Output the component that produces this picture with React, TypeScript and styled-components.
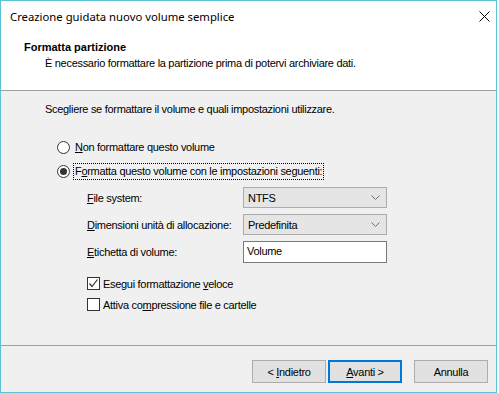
import React from 'react';
import styled, {createGlobalStyle} from 'styled-components'

const GlobalStyle = createGlobalStyle`
    html, body {
        margin:0;
        padding:0;
        background:#ffffff;
    }
    body {
        font-family:"Liberation Sans", Arial, sans-serif;
        font-size:11px;
        letter-spacing:-0.3px;
        color:#000000;
    }
`

const Window = styled.div`
    width:497px;
    height:393px;
    box-sizing:border-box;
    border:1px solid #5cc2d6;
    background:#f0f0f0;
    display:flex;
    flex-direction:column;
`
const TitleBar = styled.div`
    height:30px;
    background:#ffffff;
    display:flex;
    align-items:center;
    justify-content:space-between;
    padding:0 6px 0 9px;
    font-family:"Noto Sans", "Open Sans", sans-serif;
    font-size:11.3px;
    letter-spacing:0;
`
const Header = styled.div`
    background:#ffffff;
    border-bottom:1px solid #a0a0a0;
    display:flex;
    flex-direction:column;
    padding-top:10px;
    height:49px;
`
const HeaderTitle = styled.div`
    font-weight:bold;
    letter-spacing:0;
    line-height:13px;
    padding-left:23px;
`
const HeaderSub = styled.div`
    line-height:13px;
    margin-top:3px;
    padding-left:44px;
`
const Body = styled.div`
    flex:1;
    border-bottom:1px solid #a0a0a0;
    display:flex;
    flex-direction:column;
    padding-top:12px;
`
const Intro = styled.div`
    line-height:13px;
    padding-left:44px;
`
const RadioGroup = styled.div`
    display:flex;
    flex-direction:column;
    gap:7px;
    margin-top:23px;
    padding-left:56px;
`
const Row = styled.label`
    display:flex;
    align-items:center;
    gap:4px;
    height:17px;
`
const RadioCircle = styled.span<{checked?: boolean}>`
    width:13px;
    height:13px;
    box-sizing:border-box;
    border:1px solid #333333;
    border-radius:50%;
    background:#ffffff;
    display:flex;
    align-items:center;
    justify-content:center;
    &::after {
        content:"";
        width:7px;
        height:7px;
        border-radius:50%;
        background:${p => p.checked ? '#333333' : 'transparent'};
    }
`
const RowText = styled.span<{focused?: boolean}>`
    line-height:15px;
    padding:0 1px;
    outline:${p => p.focused ? '1px dotted #000000' : 'none'};
`
const Key = styled.span`
    text-decoration:underline;
`
const Fields = styled.div`
    display:grid;
    grid-template-columns:156px 144px;
    row-gap:6px;
    margin-top:7px;
    padding-left:86px;
`
const FieldLabel = styled.div`
    display:flex;
    align-items:center;
`
const Select = styled.div`
    height:21px;
    box-sizing:border-box;
    border:1px solid #acacac;
    background:#e5e5e5;
    display:flex;
    align-items:center;
    justify-content:space-between;
    padding:0 6px 0 4px;
`
const TextInput = styled.div`
    height:22px;
    box-sizing:border-box;
    border:1px solid #7a7a7a;
    background:#ffffff;
    display:flex;
    align-items:flex-start;
    padding:3px 0 0 3px;
`
const Checks = styled.div`
    display:flex;
    flex-direction:column;
    gap:6px;
    margin-top:13px;
    padding-left:86px;
`
const CheckRow = styled.label`
    display:flex;
    align-items:center;
    gap:3px;
    height:15px;
`
const CheckBox = styled.span`
    width:13px;
    height:13px;
    box-sizing:border-box;
    border:1px solid #333333;
    background:#ffffff;
    display:flex;
    align-items:center;
    justify-content:center;
`
const Footer = styled.div`
    height:46px;
    display:flex;
    justify-content:flex-end;
    align-items:flex-start;
    padding:14px 8px 0 0;
    box-sizing:border-box;
`
const Button = styled.div<{primary?: boolean; gapLeft?: number}>`
    width:74px;
    height:23px;
    box-sizing:border-box;
    border:${p => p.primary ? '2px solid #0078d7' : '1px solid #adadad'};
    background:#e1e1e1;
    display:flex;
    align-items:center;
    justify-content:center;
    margin-left:${p => p.gapLeft ?? 0}px;
`

function Chevron(){
    return (
        <svg width="9" height="5" viewBox="0 0 9 5">
            <path d="M0.5 0.5 L4.5 4.5 L8.5 0.5" fill="none" stroke="#707070" strokeWidth="1"/>
        </svg>
    )
}

function CloseIcon(){
    return (
        <svg width="11" height="11" viewBox="0 0 11 11">
            <path d="M0.5 0.5 L10.5 10.5 M10.5 0.5 L0.5 10.5" stroke="#000000" strokeWidth="1"/>
        </svg>
    )
}

function Tick(){
    return (
        <svg width="11" height="11" viewBox="0 0 11 11">
            <path d="M1.5 5.5 L4 8.5 L9.5 1.5" fill="none" stroke="#333333" strokeWidth="1.2"/>
        </svg>
    )
}

export default function App(){
    return (
        <Window>
            <GlobalStyle/>
            <TitleBar>
                <span>Creazione guidata nuovo volume semplice</span>
                <CloseIcon/>
            </TitleBar>
            <Header>
                <HeaderTitle>Formatta partizione</HeaderTitle>
                <HeaderSub>È necessario formattare la partizione prima di potervi archiviare dati.</HeaderSub>
            </Header>
            <Body>
                <Intro>Scegliere se formattare il volume e quali impostazioni utilizzare.</Intro>
                <RadioGroup>
                    <Row>
                        <RadioCircle/>
                        <RowText><Key>N</Key>on formattare questo volume</RowText>
                    </Row>
                    <Row>
                        <RadioCircle checked/>
                        <RowText focused>F<Key>o</Key>rmatta questo volume con le impostazioni seguenti:</RowText>
                    </Row>
                </RadioGroup>
                <Fields>
                    <FieldLabel><span><Key>F</Key>ile system:</span></FieldLabel>
                    <Select><span>NTFS</span><Chevron/></Select>
                    <FieldLabel><span><Key>D</Key>imensioni unità di allocazione:</span></FieldLabel>
                    <Select><span>Predefinita</span><Chevron/></Select>
                    <FieldLabel><span><Key>E</Key>tichetta di volume:</span></FieldLabel>
                    <TextInput>Volume</TextInput>
                </Fields>
                <Checks>
                    <CheckRow>
                        <CheckBox><Tick/></CheckBox>
                        <span>Esegui formattazione <Key>v</Key>eloce</span>
                    </CheckRow>
                    <CheckRow>
                        <CheckBox/>
                        <span>Attiva co<Key>m</Key>pressione file e cartelle</span>
                    </CheckRow>
                </Checks>
            </Body>
            <Footer>
                <Button><span>&lt; <Key>I</Key>ndietro</span></Button>
                <Button primary gapLeft={2}><span><Key>A</Key>vanti &gt;</span></Button>
                <Button gapLeft={12}>Annulla</Button>
            </Footer>
        </Window>
    )
}
